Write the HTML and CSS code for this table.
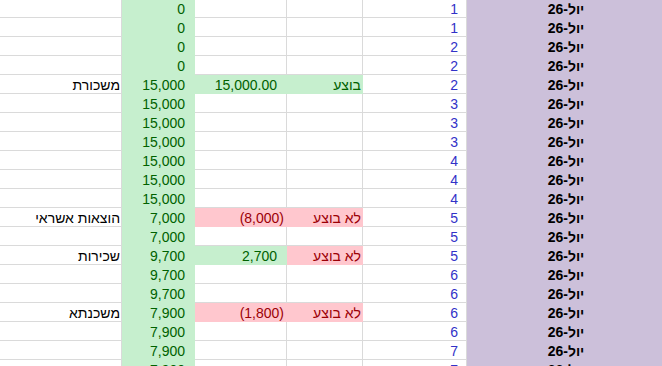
FILE: index.html
```html
<!DOCTYPE html>
<html lang="he">
<head>
<meta charset="utf-8">
<title>גיליון</title>
<link rel="stylesheet" href="styles.css">
</head>
<body>
<div class="sheet">
  <div class="c txt"></div><div class="c num green">0</div><div class="c"></div><div class="c"></div><div class="c idx">1</div><div class="c month">יול-26</div>
  <div class="c txt"></div><div class="c num green">0</div><div class="c"></div><div class="c"></div><div class="c idx">1</div><div class="c month">יול-26</div>
  <div class="c txt"></div><div class="c num green">0</div><div class="c"></div><div class="c"></div><div class="c idx">2</div><div class="c month">יול-26</div>
  <div class="c txt"></div><div class="c num green">0</div><div class="c"></div><div class="c"></div><div class="c idx">2</div><div class="c month">יול-26</div>
  <div class="c txt">משכורת</div><div class="c num green">15,000</div><div class="c num green">15,000.00</div><div class="c txt green">בוצע</div><div class="c idx">2</div><div class="c month">יול-26</div>
  <div class="c txt"></div><div class="c num green">15,000</div><div class="c"></div><div class="c"></div><div class="c idx">3</div><div class="c month">יול-26</div>
  <div class="c txt"></div><div class="c num green">15,000</div><div class="c"></div><div class="c"></div><div class="c idx">3</div><div class="c month">יול-26</div>
  <div class="c txt"></div><div class="c num green">15,000</div><div class="c"></div><div class="c"></div><div class="c idx">3</div><div class="c month">יול-26</div>
  <div class="c txt"></div><div class="c num green">15,000</div><div class="c"></div><div class="c"></div><div class="c idx">4</div><div class="c month">יול-26</div>
  <div class="c txt"></div><div class="c num green">15,000</div><div class="c"></div><div class="c"></div><div class="c idx">4</div><div class="c month">יול-26</div>
  <div class="c txt"></div><div class="c num green">15,000</div><div class="c"></div><div class="c"></div><div class="c idx">4</div><div class="c month">יול-26</div>
  <div class="c txt">הוצאות אשראי</div><div class="c num green">7,000</div><div class="c num neg pink">(8,000)</div><div class="c txt pink">לא בוצע</div><div class="c idx">5</div><div class="c month">יול-26</div>
  <div class="c txt"></div><div class="c num green">7,000</div><div class="c"></div><div class="c"></div><div class="c idx">5</div><div class="c month">יול-26</div>
  <div class="c txt">שכירות</div><div class="c num green">9,700</div><div class="c num green">2,700</div><div class="c txt pink">לא בוצע</div><div class="c idx">5</div><div class="c month">יול-26</div>
  <div class="c txt"></div><div class="c num green">9,700</div><div class="c"></div><div class="c"></div><div class="c idx">6</div><div class="c month">יול-26</div>
  <div class="c txt"></div><div class="c num green">9,700</div><div class="c"></div><div class="c"></div><div class="c idx">6</div><div class="c month">יול-26</div>
  <div class="c txt">משכנתא</div><div class="c num green">7,900</div><div class="c num neg pink">(1,800)</div><div class="c txt pink">לא בוצע</div><div class="c idx">6</div><div class="c month">יול-26</div>
  <div class="c txt"></div><div class="c num green">7,900</div><div class="c"></div><div class="c"></div><div class="c idx">6</div><div class="c month">יול-26</div>
  <div class="c txt"></div><div class="c num green">7,900</div><div class="c"></div><div class="c"></div><div class="c idx">7</div><div class="c month">יול-26</div>
  <div class="c txt"></div><div class="c num green">7,900</div><div class="c"></div><div class="c"></div><div class="c idx">7</div><div class="c month">יול-26</div>
</div>
</body>
</html>
```
FILE: styles.css
```css
html, body {
  margin: 0;
  padding: 0;
  background: #ffffff;
  overflow: hidden;
}

.sheet {
  display: grid;
  grid-template-columns: 122px 73px 92px 76px 104px 195px;
  grid-auto-rows: 19px;
  margin-top: -1px;
  font-family: "Liberation Sans", Arial, sans-serif;
  font-size: 14px;
  color: #000000;
}

.c {
  box-sizing: border-box;
  height: 19px;
  padding: 2px 1px 0 1px;
  line-height: 16px;
  border-right: 1px solid #dadada;
  border-bottom: 1px solid #dadada;
  text-align: right;
  white-space: nowrap;
  overflow: hidden;
}

.txt {
  direction: rtl;
  text-align: right;
}

.num {
  direction: ltr;
  padding-right: 9px;
}

.num.neg {
  padding-right: 2px;
}

.green {
  background: #c6efce;
  color: #006100;
  border-color: #c6efce;
}

.pink {
  background: #ffc7ce;
  color: #9c0006;
  border-color: #ffc7ce;
}

.idx {
  direction: ltr;
  color: #3232c8;
  padding-right: 8px;
}

.month {
  direction: rtl;
  text-align: center;
  font-weight: bold;
  background: #ccc0da;
  border-color: #ccc0da;
  padding-left: 4px;
  padding-right: 0;
}
```
